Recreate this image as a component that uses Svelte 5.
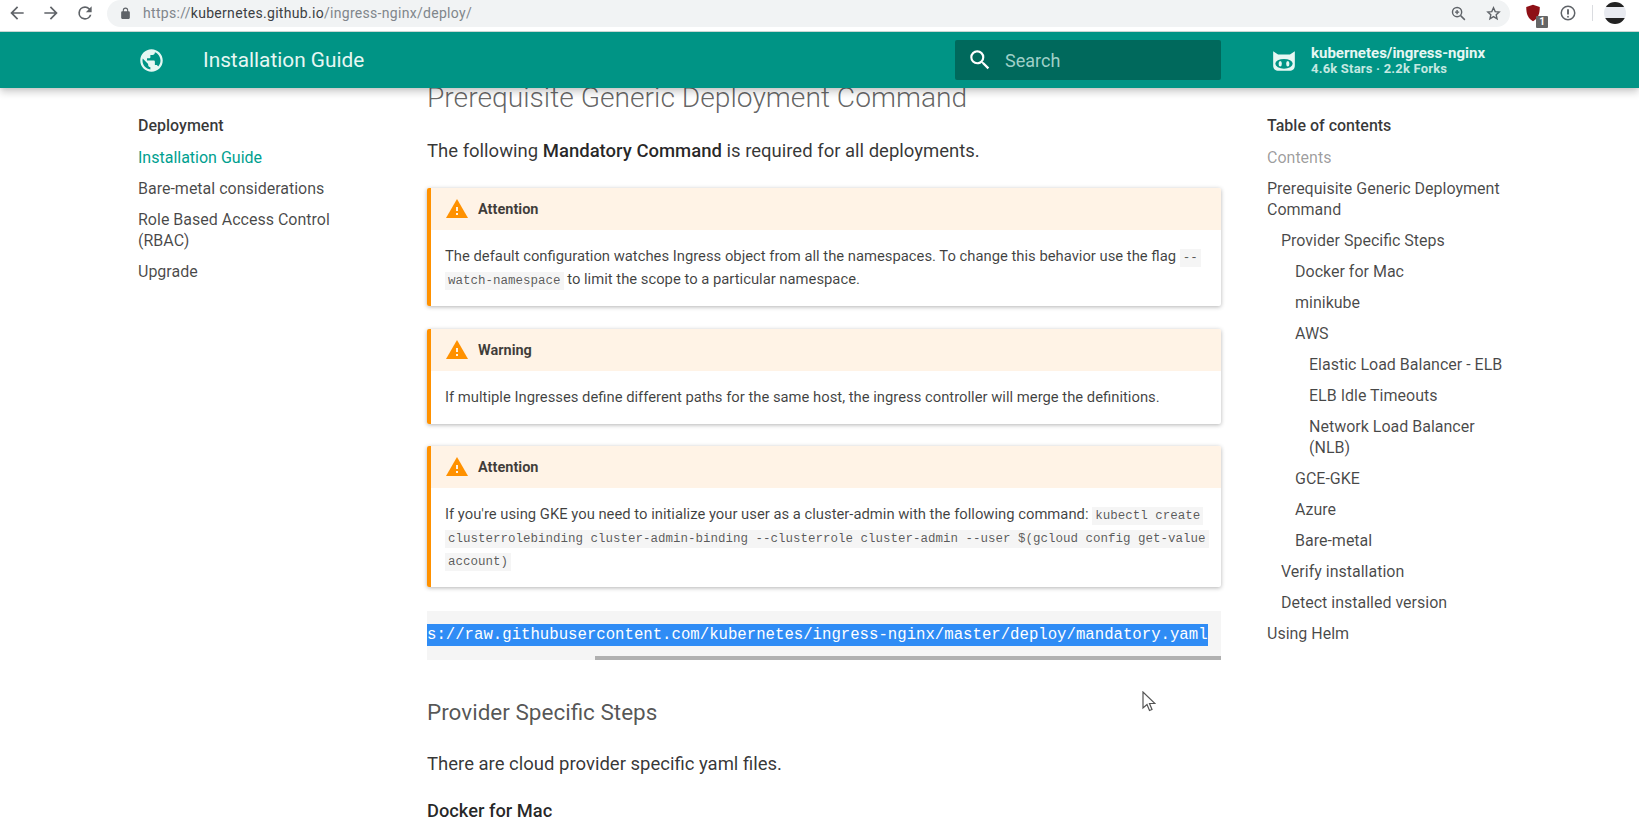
<script>
  const nav = [
    { label: 'Installation Guide', active: true },
    { label: 'Bare-metal considerations' },
    { label: 'Role Based Access Control (RBAC)' },
    { label: 'Upgrade' }
  ]

  const toc = [
    { label: 'Contents', depth: 0, muted: true },
    { label: 'Prerequisite Generic Deployment Command', depth: 0 },
    { label: 'Provider Specific Steps', depth: 1 },
    { label: 'Docker for Mac', depth: 2 },
    { label: 'minikube', depth: 2 },
    { label: 'AWS', depth: 2 },
    { label: 'Elastic Load Balancer - ELB', depth: 3 },
    { label: 'ELB Idle Timeouts', depth: 3 },
    { label: 'Network Load Balancer (NLB)', depth: 3 },
    { label: 'GCE-GKE', depth: 2 },
    { label: 'Azure', depth: 2 },
    { label: 'Bare-metal', depth: 2 },
    { label: 'Verify installation', depth: 1 },
    { label: 'Detect installed version', depth: 1 },
    { label: 'Using Helm', depth: 0 }
  ]
</script>

{#snippet warn()}
  <svg class="warn" viewBox="0 0 24 24"><path fill="#ff9100" d="M1 21h22L12 2 1 21z" /><path fill="#fff3e6" d="M13 18h-2v-2h2v2zm0-4h-2v-4h2v4z" /></svg>
{/snippet}

<div class="page">
  <div class="chrome">
    <svg class="cicon" viewBox="0 0 24 24"><path d="M20 11H7.8l5.6-5.6L12 4l-8 8 8 8 1.400-1.400L7.800 13H20z" /></svg>
    <svg class="cicon" viewBox="0 0 24 24"><path d="M4 11h12.200l-5.600-5.600L12 4l8 8-8 8-1.400-1.400 5.600-5.600H4z" /></svg>
    <svg class="cicon" viewBox="0 0 24 24"><path d="M17.650 6.350A7.960 7.960 0 0 0 12 4a8 8 0 1 0 7.730 10h-2.080A6 6 0 1 1 12 6c1.660 0 3.140.69 4.220 1.780L13 11h7V4l-2.350 2.350z" /></svg>
    <div class="omnibox">
      <svg class="lock" viewBox="0 0 24 24"><path fill="#5f6368" d="M18 8h-1V6a5 5 0 0 0-10 0v2H6a2 2 0 0 0-2 2v10a2 2 0 0 0 2 2h12a2 2 0 0 0 2-2V10a2 2 0 0 0-2-2zM9 6a3 3 0 0 1 6 0v2H9z" /></svg>
      <span class="url">https://<b>kubernetes.github.io</b>/ingress-nginx/deploy/</span>
      <svg class="oicon zoom" viewBox="0 0 24 24"><circle cx="10" cy="10" r="6.500" fill="none" stroke="#5f6368" stroke-width="2" /><path stroke="#5f6368" stroke-width="2" d="M15 15l6 6M7 10h6M10 7v6" /></svg>
      <svg class="oicon" viewBox="0 0 24 24"><path fill="none" stroke="#5f6368" stroke-width="2" d="M12 4l2.400 5.400 5.600.6-4.200 3.800 1.200 5.700-5-3-5 3 1.200-5.700L4 10l5.600-.6z" /></svg>
    </div>
    <div class="ext">
      <svg class="shield" viewBox="0 0 24 24"><path fill="#8e1016" d="M12 1l9 3c0 9-2 15-9 19C5 19 3 13 3 4z" /></svg>
      <span class="badge">1</span>
    </div>
    <svg class="info" viewBox="0 0 24 24"><circle cx="12" cy="12" r="9" fill="none" stroke="#5f6368" stroke-width="2" /><path stroke="#5f6368" stroke-width="2.500" d="M12 7v7" /><circle cx="12" cy="17" r="1.200" fill="#5f6368" /></svg>
    <span class="divider"></span>
    <span class="avatar"></span>
  </div>

  <header class="topbar">
    <div class="brand">
      <svg class="globe" viewBox="0 0 24 24"><path fill="#e6f7f3" d="M12 2C6.480 2 2 6.480 2 12s4.480 10 10 10 10-4.480 10-10S17.520 2 12 2zm-1 17.930c-3.950-.49-7-3.850-7-7.930 0-.62.08-1.210.21-1.790L9 15v1c0 1.100.9 2 2 2v1.930zm6.900-2.540c-.26-.81-1-1.390-1.900-1.390h-1v-3c0-.55-.45-1-1-1H8v-2h2c.55 0 1-.45 1-1V7h2c1.100 0 2-.9 2-2v-.41c2.930 1.190 5 4.060 5 7.410 0 2.080-.8 3.970-2.100 5.390z" /></svg>
      <span class="title">Installation Guide</span>
    </div>
    <div class="search">
      <svg class="sicon" viewBox="0 0 24 24"><path fill="#fff" d="M15.500 14h-.79l-.28-.27A6.470 6.470 0 0 0 16 9.500 6.500 6.500 0 1 0 9.500 16c1.610 0 3.090-.59 4.230-1.570l.27.28v.79l5 4.990L20.490 19l-4.990-5zm-6 0C7.010 14 5 11.990 5 9.500S7.010 5 9.500 5 14 7.010 14 9.500 11.990 14 9.500 14z" /></svg>
      <span>Search</span>
    </div>
    <div class="repo">
      <svg class="cat" viewBox="0 0 24 24"><path fill="#e6f7f3" d="M2 4l4.500 3h11L22 4v13c0 3-2 5-5 5H7c-3 0-5-2-5-5z" /><ellipse cx="12" cy="15.500" rx="8" ry="4.500" fill="#009485" /><ellipse cx="8.500" cy="15.500" rx="1.500" ry="2.500" fill="#e6f7f3" /><ellipse cx="15.500" cy="15.500" rx="1.500" ry="2.500" fill="#e6f7f3" /></svg>
      <div class="repo-text">
        <strong>kubernetes/ingress-nginx</strong>
        <small>4.6k Stars · 2.2k Forks</small>
      </div>
    </div>
  </header>

  <div class="columns">
    <nav class="side">
      <div class="side-title">Deployment</div>
      {#each nav as item}
        <a class:active={item.active}>{item.label}</a>
      {/each}
    </nav>

    <main class="content">
      <h2>Prerequisite Generic Deployment Command</h2>
      <p class="lead">The following <b>Mandatory Command</b> is required for all deployments.</p>

      <section class="note first">
        <div class="note-title">{@render warn()}Attention</div>
        <p>The default configuration watches Ingress object from all the namespaces. To change this behavior use the flag <code>--watch-namespace</code> to limit the scope to a particular namespace.</p>
      </section>

      <section class="note second">
        <div class="note-title">{@render warn()}Warning</div>
        <p>If multiple Ingresses define different paths for the same host, the ingress controller will merge the definitions.</p>
      </section>

      <section class="note third">
        <div class="note-title">{@render warn()}Attention</div>
        <p>If you're using GKE you need to initialize your user as a cluster-admin with the following command: <code>kubectl create clusterrolebinding cluster-admin-binding --clusterrole cluster-admin --user $(gcloud config get-value account)</code></p>
      </section>

      <div class="codeblock">
        <pre><span class="sel">s://raw.githubusercontent.com/kubernetes/ingress-nginx/master/deploy/mandatory.yaml</span></pre>
        <div class="thumb"></div>
      </div>

      <h3>Provider Specific Steps</h3>
      <p class="lead two">There are cloud provider specific yaml files.</p>
      <h4>Docker for Mac</h4>
    </main>

    <aside class="toc">
      <div class="side-title">Table of contents</div>
      {#each toc as item}
        <a class:muted={item.muted} class="d{item.depth}">{item.label}</a>
      {/each}
    </aside>
  </div>

  <svg class="pointer" viewBox="0 0 14 22"><path fill="#fff" stroke="#555" stroke-width="1.200" d="M1 1v16l4-3.500 2.500 6 2.500-1-2.500-6H13z" /></svg>
</div>

<style>
  :global(body) {
    background: #fff;
    font-family: Roboto, "Liberation Sans", sans-serif;
  }

  .page {
    position: relative;
    height: 836px;
    overflow: hidden;
    color: rgba(0, 0, 0, 0.8);
  }

  .chrome {
    position: relative;
    z-index: 3;
    display: flex;
    align-items: center;
    height: 32px;
    padding: 0 0 0 7px;
    box-sizing: border-box;
    background: #fff;
    border-bottom: 1px solid #c9d6d3;
  }

  .cicon {
    width: 20px;
    height: 20px;
    margin-right: 14px;
    margin-top: -5px;
    fill: #5f6368;
  }

  .omnibox {
    display: flex;
    align-items: center;
    flex: 0 0 1403px;
    height: 27px;
    margin: -5px 0 0 -2px;
    padding-left: 12px;
    box-sizing: border-box;
    background: #f1f3f4;
    border-radius: 14px;
  }

  .lock {
    width: 13px;
    height: 13px;
  }

  .url {
    margin-left: 11px;
    font-size: 14px;
    color: #80868b;
    letter-spacing: 0.3px;
  }

  .url b {
    font-weight: 400;
    color: #3c4043;
  }

  .oicon {
    width: 17px;
    height: 17px;
    margin-left: 18px;
  }

  .oicon.zoom {
    margin-left: auto;
  }

  .oicon:last-child {
    margin-right: 8px;
  }

  .ext {
    position: relative;
    width: 18px;
    height: 18px;
    margin: -5px 0 0 14px;
  }

  .shield {
    width: 18px;
    height: 18px;
  }

  .badge {
    position: absolute;
    right: -6px;
    bottom: -6px;
    width: 12px;
    height: 12px;
    background: #666;
    color: #fff;
    font-size: 10px;
    font-weight: 700;
    line-height: 12px;
    text-align: center;
    border-radius: 1px;
  }

  .info {
    width: 18px;
    height: 18px;
    margin: -5px 0 0 17px;
  }

  .divider {
    width: 1px;
    height: 16px;
    margin: -5px 0 0 15px;
    background: #dadce0;
  }

  .avatar {
    width: 22px;
    height: 22px;
    margin: -5px 0 0 11px;
    border-radius: 50%;
    background: linear-gradient(#222 0 22%, #e8eaf0 22% 72%, #222 72%);
  }

  .topbar {
    position: relative;
    z-index: 2;
    display: flex;
    align-items: center;
    height: 56px;
    background: #009485;
    color: #fff;
    box-shadow: 0 0 4px rgba(0, 0, 0, 0.1), 0 4px 8px rgba(0, 0, 0, 0.2);
  }

  .brand {
    display: flex;
    align-items: center;
    width: 955px;
    padding-left: 138px;
    box-sizing: border-box;
  }

  .globe {
    width: 27px;
    height: 27px;
  }

  .title {
    margin-left: 38px;
    font-size: 20.800px;
    color: #e6f7f3;
  }

  .search {
    display: flex;
    align-items: center;
    width: 266px;
    height: 40px;
    padding-left: 12px;
    box-sizing: border-box;
    background: #00695c;
    border-radius: 2px;
    font-size: 18px;
    color: #9fd0c8;
  }

  .sicon {
    width: 26px;
    height: 26px;
    margin-right: 12px;
  }

  .repo {
    display: flex;
    align-items: center;
    margin-left: 50px;
  }

  .cat {
    width: 26px;
    height: 26px;
    margin-right: 14px;
  }

  .repo-text {
    display: flex;
    flex-direction: column;
    margin-top: 1px;
    line-height: 16px;
    color: #e6f7f3;
  }

  .repo-text strong {
    font-size: 15px;
    font-weight: 700;
  }

  .repo-text small {
    font-size: 13px;
    font-weight: 700;
    letter-spacing: 0.2px;
    color: #c4e8e1;
  }

  .columns {
    display: grid;
    grid-template-columns: 427px 794px 1fr;
  }

  .side {
    display: flex;
    flex-direction: column;
    padding: 27px 0 0 138px;
    box-sizing: border-box;
  }

  .toc {
    display: flex;
    flex-direction: column;
    width: 245px;
    padding: 27px 0 0 46px;
  }

  .side-title {
    margin-bottom: 11px;
    font-size: 16px;
    font-weight: 500;
    line-height: 21px;
    color: rgba(0, 0, 0, 0.78);
  }

  .side a,
  .toc a {
    width: 215px;
    margin-bottom: 10px;
    font-size: 16px;
    line-height: 21px;
    color: rgba(0, 0, 0, 0.72);
  }

  .side a.active {
    color: #00a08f;
  }

  .toc a {
    width: auto;
    box-sizing: border-box;
  }

  .toc a.muted {
    color: rgba(0, 0, 0, 0.4);
  }

  .toc a.d1 {
    padding-left: 14px;
  }

  .toc a.d2 {
    padding-left: 28px;
  }

  .toc a.d3 {
    padding-left: 42px;
  }

  .content {
    min-width: 0;
  }

  h2 {
    margin: -7px 0 0;
    font-size: 28.200px;
    font-weight: 300;
    line-height: 34px;
    color: rgba(0, 0, 0, 0.62);
  }

  .lead {
    margin: 23px 0 0;
    font-size: 18.500px;
    line-height: 26px;
  }

  .lead b {
    font-weight: 500;
    color: rgba(0, 0, 0, 0.85);
  }

  .lead.two {
    margin-top: 24px;
  }

  .note {
    border-left: 4px solid #ff9100;
    border-radius: 2px;
    box-shadow: 0 1px 4px rgba(0, 0, 0, 0.3);
    overflow: hidden;
  }

  .note.first {
    margin-top: 24px;
  }

  .note.second {
    margin-top: 23px;
  }

  .note.third {
    margin-top: 22px;
  }

  .note-title {
    display: flex;
    align-items: center;
    height: 42px;
    padding-left: 14px;
    background: #fff3e6;
    font-size: 14.500px;
    font-weight: 700;
    color: rgba(0, 0, 0, 0.75);
  }

  .warn {
    width: 24px;
    height: 24px;
    margin-right: 9px;
  }

  .note p {
    margin: 0;
    padding: 15px 6px 15px 14px;
    font-size: 14.800px;
    line-height: 23px;
    color: rgba(0, 0, 0, 0.75);
  }

  code {
    padding: 2px 3px;
    background: #f5f5f5;
    font-family: "Liberation Mono", "DejaVu Sans Mono", monospace;
    font-size: 12.500px;
    line-height: 1;
    color: rgba(0, 0, 0, 0.65);
    box-decoration-break: clone;
    -webkit-box-decoration-break: clone;
  }

  .codeblock {
    margin-top: 24px;
    padding-top: 13px;
    background: #f5f5f5;
    overflow: hidden;
  }

  pre {
    margin: 0;
    font-family: "Liberation Mono", "DejaVu Sans Mono", monospace;
    font-size: 15.680px;
    line-height: 23px;
  }

  .sel {
    padding: 2px 0;
    background: #2f8cf5;
    color: #fff;
  }

  .thumb {
    height: 4px;
    margin: 9px 0 0 168px;
    background: #b0b0b0;
  }

  h3 {
    margin: 37px 0 0;
    font-size: 22.500px;
    font-weight: 400;
    line-height: 30px;
    color: rgba(0, 0, 0, 0.68);
  }

  h4 {
    margin: 21px 0 0;
    font-size: 18.300px;
    font-weight: 500;
    line-height: 26px;
    color: rgba(0, 0, 0, 0.85);
  }

  .pointer {
    position: absolute;
    left: 1142px;
    top: 691px;
    width: 14px;
    height: 22px;
  }
</style>
